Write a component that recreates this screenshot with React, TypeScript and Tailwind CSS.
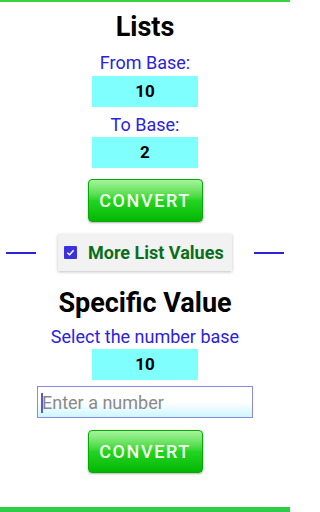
import React from "react";

const font = { fontFamily: "Roboto, 'Noto Sans', sans-serif" };

const BaseBox = ({ value }: { value: string }) => (
  <div className="w-[106px] h-[31px] bg-[#80ffff] flex items-center justify-center text-[17px] font-bold text-black">
    {value}
  </div>
);

const ConvertButton = () => (
  <button className="w-[115px] h-[43px] rounded-[4px] border border-[#06a806] bg-gradient-to-b from-[#a4f59a] via-[#22d422] to-[#00b800] shadow-[0_1px_2px_rgba(0,0,0,0.3)] text-[18px] font-medium tracking-[1.6px] text-[#f4fff0]">
    CONVERT
  </button>
);

export default function App() {
  return (
    <div
      className="h-[512px] w-[290px] bg-white border-t-2 border-t-[#34d43a] border-b-[5px] border-b-[#2ecc48] flex flex-col items-center"
      style={font}
    >
      <h1 className="mt-[10px] text-[27px] leading-[30px] font-bold text-black">Lists</h1>

      <p className="mt-[11px] text-[18px] leading-[20px] text-[#2a22e0]">From Base:</p>
      <div className="mt-[3px]">
        <BaseBox value="10" />
      </div>

      <p className="mt-[8px] text-[18px] leading-[20px] text-[#2a22e0]">To Base:</p>
      <div className="mt-[2px]">
        <BaseBox value="2" />
      </div>

      <div className="mt-[11px]">
        <ConvertButton />
      </div>

      {/* divider with checkbox card */}
      <div className="mt-[12px] flex items-center gap-[22px]">
        <div className="w-[30px] h-[2px] bg-[#2a22e0]" />
        <div className="w-[174px] h-[37px] bg-[#f2f2f2] shadow-[0_1px_3px_rgba(0,0,0,0.25)] flex items-center pl-[6px]">
          <span className="w-[13px] h-[13px] bg-[#3a33dd] flex items-center justify-center rounded-[1px]">
            <svg width="9" height="9" viewBox="0 0 10 10" fill="none">
              <path d="M1.5 5.2 L4 7.5 L8.5 2.5" stroke="white" strokeWidth="1.6" />
            </svg>
          </span>
          <span className="ml-[11px] text-[18px] font-bold text-[#0a6e1a]">More List Values</span>
        </div>
        <div className="w-[30px] h-[2px] bg-[#2a22e0]" />
      </div>

      <h2 className="mt-[17px] text-[27px] leading-[30px] font-bold text-black">Specific Value</h2>

      <p className="mt-[9px] text-[18px] leading-[20px] text-[#2a22e0]">Select the number base</p>
      <div className="mt-[2px]">
        <BaseBox value="10" />
      </div>

      <div className="relative mt-[6px] w-[216px] h-[32px] border border-[#8a8ae6] bg-gradient-to-b from-white via-white to-[#cdf6ff] flex items-center pl-[4px]">
        <span className="absolute left-[3px] top-[6px] w-[2px] h-[20px] bg-[#5a5ad0]" />
        <span className="text-[18px] text-[#8a8a8a]">Enter a number</span>
      </div>

      <div className="mt-[12px]">
        <ConvertButton />
      </div>
    </div>
  );
}
